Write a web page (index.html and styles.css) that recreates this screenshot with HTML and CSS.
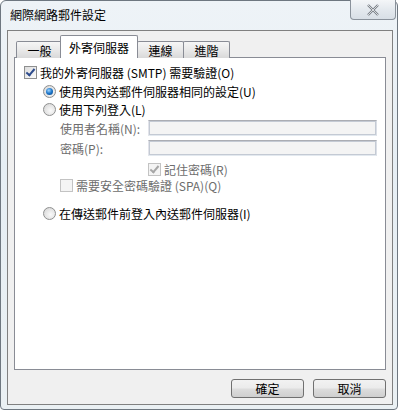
FILE: index.html
```html
<!DOCTYPE html>
<html>
<head>
    <title>網際網路郵件設定</title>
    <link rel="stylesheet" href="styles.css">
</head>
<body>
    <div class="window">
        <!-- Title bar -->
        <div class="titlebar">
            <span class="title">網際網路郵件設定</span>
            <div class="close">
                <svg width="14" height="12" viewBox="0 0 14 12">
                    <path d="M2 1 L12 11 M12 1 L2 11" stroke="#7a7f86" stroke-width="2.4" fill="none"/>
                    <path d="M2 1 L12 11 M12 1 L2 11" stroke="#eef1f4" stroke-width="0.8" fill="none"/>
                </svg>
            </div>
        </div>

        <div class="client">
            <!-- Tabs -->
            <div class="tabs">
                <div class="tab">一般</div>
                <div class="tab active">外寄伺服器</div>
                <div class="tab">連線</div>
                <div class="tab">進階</div>
            </div>

            <div class="panel">
                <div class="row r1">
                    <span class="check on"></span>
                    <span>我的外寄伺服器 (SMTP) 需要驗證(O)</span>
                </div>
                <div class="row r2 indent1">
                    <span class="radio on"></span>
                    <span>使用與內送郵件伺服器相同的設定(U)</span>
                </div>
                <div class="row r3 indent1">
                    <span class="radio"></span>
                    <span>使用下列登入(L)</span>
                </div>
                <div class="row r4 indent2 field">
                    <span class="label">使用者名稱(N):</span>
                    <span class="input"></span>
                </div>
                <div class="row r5 indent2 field">
                    <span class="label">密碼(P):</span>
                    <span class="input"></span>
                </div>
                <div class="row r6 indent3 muted">
                    <span class="check on disabled"></span>
                    <span>記住密碼(R)</span>
                </div>
                <div class="row r7 indent2 muted">
                    <span class="check disabled"></span>
                    <span>需要安全密碼驗證 (SPA)(Q)</span>
                </div>
                <div class="row r8 indent1">
                    <span class="radio"></span>
                    <span>在傳送郵件前登入內送郵件伺服器(I)</span>
                </div>
            </div>

            <div class="buttons">
                <button class="btn">確定</button>
                <button class="btn">取消</button>
            </div>
        </div>
    </div>
</body>
</html>
```

FILE: styles.css
```css
body {
    margin: 0;
    font-family: "Noto Sans CJK TC", "Liberation Sans", sans-serif;
    font-size: 12px;
    color: #000;
    background: #ffffff;
}
.window {
    width: 398px;
    height: 410px;
    box-sizing: border-box;
    background: linear-gradient(180deg, #eef3f7 0%, #e6eef4 40%, #eaf0f3 100%);
    border: 1px solid #6e7780;
    border-radius: 6px 6px 4px 4px;
    display: flex;
    flex-direction: column;
}
.titlebar {
    height: 29px;
    display: flex;
    justify-content: space-between;
    align-items: flex-start;
    padding-left: 9px;
}
.title {
    margin-top: 6px;
    font-size: 12px;
    line-height: 16px;
}
.close {
    width: 44px;
    height: 19px;
    margin-right: 1px;
    margin-top: -1px;
    border: 1px solid #8a929b;
    border-top: none;
    border-radius: 0 0 4px 4px;
    background: linear-gradient(180deg, #f4f6f8 0%, #e4e9ee 50%, #d8dfe6 100%);
    display: flex;
    align-items: center;
    justify-content: center;
}
.client {
    flex: 1;
    margin: 0 4px 4px 6px;
    background: #f0f0f0;
    border: 1px solid #808080;
    display: flex;
    flex-direction: column;
    padding: 5px 6px 0 6px;
}
.tabs {
    display: flex;
    align-items: flex-end;
    height: 22px;
    padding-left: 2px;
    position: relative;
    z-index: 1;
    margin-bottom: -1px;
}
.tab {
    height: 17px;
    box-sizing: border-box;
    border: 1px solid #898c95;
    border-bottom: none;
    border-radius: 2px 2px 0 0;
    background: linear-gradient(180deg, #f6f6f6 0%, #e9e9e9 50%, #d9d9d9 100%);
    line-height: 17px;
    padding: 0 6px;
    min-width: 47px;
    text-align: center;
    margin-right: -1px;
}
.tab.active {
    height: 23px;
    background: #ffffff;
    padding: 3px 8px 0 8px;
    margin: 0 -1px 0 -2px;
    min-width: 77px;
}
.panel {
    height: 313px;
    box-sizing: border-box;
    background: #ffffff;
    border: 1px solid #898c95;
    padding-left: 9px;
    display: flex;
    flex-direction: column;
}
.row {
    height: 16px;
    display: flex;
    align-items: center;
    gap: 3px;
    white-space: nowrap;
}
.r1 { margin-top: 6px; }
.r2 { margin-top: 3px; }
.r3 { margin-top: 2px; }
.r4 { margin-top: 3px; }
.r5 { margin-top: 4px; }
.r6 { margin-top: 5px; }
.r7 { margin-top: 0; }
.r8 { margin-top: 12px; }
.indent1 { padding-left: 19px; }
.indent2 { padding-left: 36px; }
.indent3 { padding-left: 124px; }
.muted { color: #6d6d6d; }
.field .label {
    width: 85px;
    color: #6d6d6d;
}
.input {
    width: 227px;
    height: 14px;
    border: 1px solid #abadb3;
    border-color: #abadb3 #dbdfe6 #e3e9ef #e2e3ea;
    background: #f4f4f4;
    box-shadow: inset 0 0 0 1px #c4cad4;
}
.check {
    width: 11px;
    height: 11px;
    border: 1px solid #8e8f8f;
    background: linear-gradient(135deg, #dcdcdc 0%, #fbfbfb 100%);
    position: relative;
    flex: none;
}
.check.on::after {
    content: "";
    position: absolute;
    left: 3px;
    top: 0px;
    width: 3px;
    height: 7px;
    border: solid #2d4b8c;
    border-width: 0 2px 2px 0;
    transform: rotate(40deg);
}
.check.disabled {
    border-color: #c3c3c3;
    background: #f4f4f4;
}
.check.on.disabled::after {
    border-color: #a6a6a6;
}
.radio {
    width: 11px;
    height: 11px;
    border: 1px solid #8e8f8f;
    border-radius: 50%;
    background: radial-gradient(circle at 60% 60%, #fafafa 0%, #dedede 70%, #cfcfcf 100%);
    position: relative;
    flex: none;
}
.radio.on::after {
    content: "";
    position: absolute;
    left: 2px;
    top: 2px;
    width: 7px;
    height: 7px;
    border-radius: 50%;
    background: radial-gradient(circle at 40% 35%, #9fd5ff 0%, #1b75c9 50%, #0b3e7d 100%);
}
.buttons {
    display: flex;
    justify-content: flex-end;
    gap: 9px;
    margin-top: 9px;
}
.btn {
    width: 73px;
    height: 19px;
    font-family: "Noto Sans CJK TC", "Liberation Sans", sans-serif;
    font-size: 12px;
    line-height: 15px;
    padding: 0;
    border: 1px solid #707070;
    border-radius: 3px;
    background: linear-gradient(180deg, #f2f2f2 0%, #ebebeb 48%, #dddddd 52%, #cfcfcf 100%);
    color: #000;
}
```
